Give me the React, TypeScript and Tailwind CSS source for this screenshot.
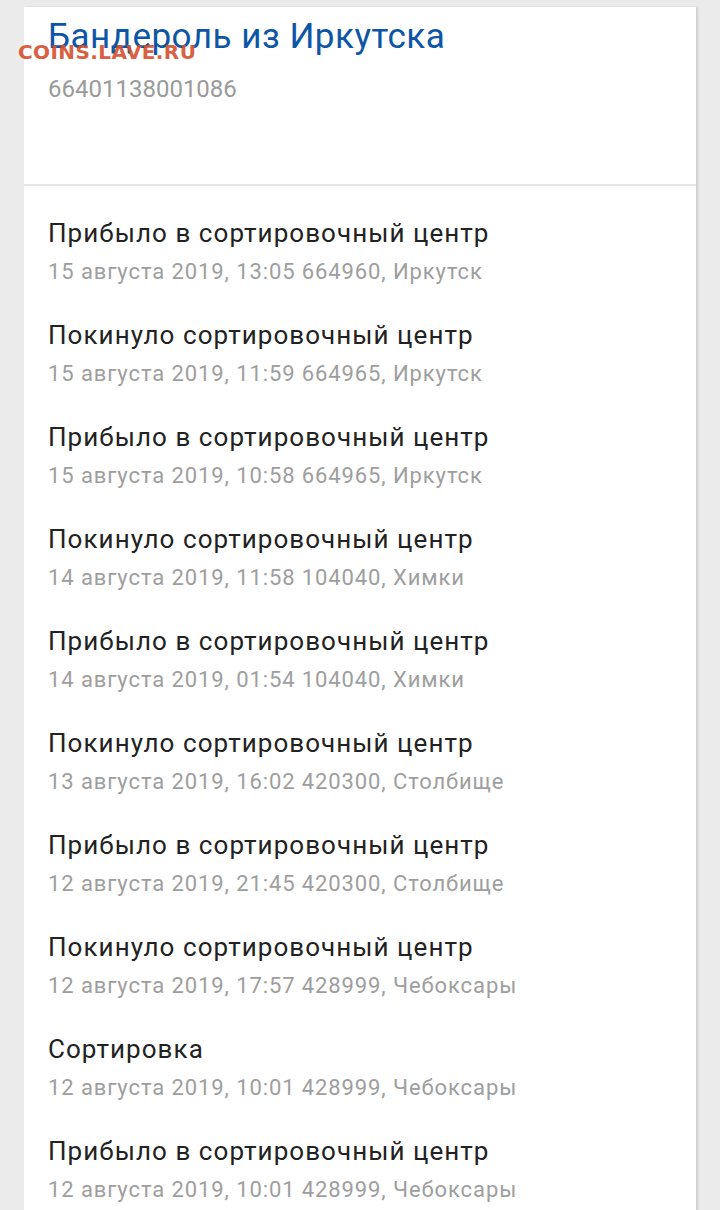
import React from "react";

const events = [
  ["Прибыло в сортировочный центр", "15 августа 2019, 13:05 664960, Иркутск"],
  ["Покинуло сортировочный центр", "15 августа 2019, 11:59 664965, Иркутск"],
  ["Прибыло в сортировочный центр", "15 августа 2019, 10:58 664965, Иркутск"],
  ["Покинуло сортировочный центр", "14 августа 2019, 11:58 104040, Химки"],
  ["Прибыло в сортировочный центр", "14 августа 2019, 01:54 104040, Химки"],
  ["Покинуло сортировочный центр", "13 августа 2019, 16:02 420300, Столбище"],
  ["Прибыло в сортировочный центр", "12 августа 2019, 21:45 420300, Столбище"],
  ["Покинуло сортировочный центр", "12 августа 2019, 17:57 428999, Чебоксары"],
  ["Сортировка", "12 августа 2019, 10:01 428999, Чебоксары"],
  ["Прибыло в сортировочный центр", "12 августа 2019, 10:01 428999, Чебоксары"],
];

export default function App() {
  return (
    <div className="w-[720px] h-[1210px] overflow-hidden bg-[#ebebeb] pt-[7px] font-['Roboto',sans-serif] relative">
      <div className="ml-[24px] w-[672px] h-[1300px] bg-white shadow-[2px_0_2px_rgba(0,0,0,0.12)]">
        <div className="pl-[24px] pt-[9px] h-[177px]">
          <div className="text-[35px] leading-[42px] tracking-[0.5px] text-[#0d56a6]">Бандероль из Иркутска</div>
          <div className="mt-[17px] text-[24px] leading-[28px] text-[#9a9a9a]">66401138001086</div>
        </div>
        <div className="h-[2px] bg-[#e6e6e6]" />
        <div className="pl-[24px] pt-[27px]">
          {events.map(([t, s], i) => (
            <div key={i} className="mb-[24px]">
              <div className="text-[26px] leading-[40px] tracking-[1.05px] text-[#222222]">{t}</div>
              <div className="text-[22px] leading-[38px] tracking-[0.9px] text-[#9e9e9e]">{s}</div>
            </div>
          ))}
        </div>
      </div>
      <div className="absolute left-[18px] top-[40px] text-[20px] leading-[24px] tracking-[0.4px] font-bold text-[#d4502f] opacity-90 font-['DejaVu_Sans',sans-serif]">
        COINS.LAVE.RU
      </div>
    </div>
  );
}
